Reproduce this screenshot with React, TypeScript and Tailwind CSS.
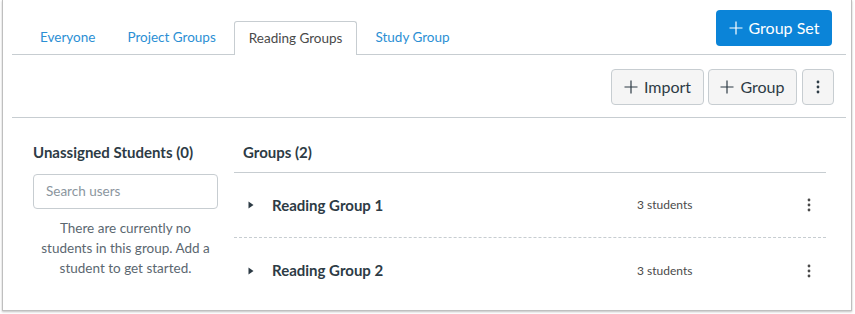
import React from "react";

const tabs = ["Everyone", "Project Groups", "Reading Groups", "Study Group"];
const active = "Reading Groups";

const groups = [
  { name: "Reading Group 1", count: "3 students" },
  { name: "Reading Group 2", count: "3 students" },
];

function Kebab({ className = "" }: { className?: string }) {
  return (
    <svg width="4" height="16" viewBox="0 0 4 16" className={className}>
      <circle cx="2" cy="3" r="1.4" fill="currentColor" />
      <circle cx="2" cy="8" r="1.4" fill="currentColor" />
      <circle cx="2" cy="13" r="1.4" fill="currentColor" />
    </svg>
  );
}

function Plus() {
  return (
    <svg width="14" height="14" viewBox="0 0 14 14" className="shrink-0">
      <path d="M7 0.5v13M0.5 7h13" stroke="currentColor" strokeWidth="1.2" />
    </svg>
  );
}

export default function App() {
  return (
    <div className="w-[855px] h-[314px] bg-white font-['Lato','Liberation_Sans',sans-serif] text-[#2d3b45]">
      <div className="ml-[2px] w-[850px] h-[311px] border-x border-b border-[#bfbfbf] shadow-[0_1px_2px_rgba(0,0,0,0.25)] pl-[9px] pr-[5px]">
        {/* tabs + group set */}
        <div className="flex justify-between h-[55px] border-b border-[#c7cdd1]">
          <ul className="flex items-end gap-[4px] pl-[14px]">
            {tabs.map((t) => (
              <li
                key={t}
                className={
                  t === active
                    ? "h-[34px] -mb-px px-[14px] flex items-center bg-white border border-b-0 border-[#c7cdd1] rounded-t-[3px] text-[13.5px] text-[#4a4a4a]"
                    : "h-[34px] px-[14px] flex items-center text-[13.5px] text-[#2b8fd4]"
                }
              >
                {t}
              </li>
            ))}
          </ul>
          <button className="mt-[10px] mr-[14px] h-[36px] w-[116px] flex items-center justify-center gap-[6px] rounded-[4px] bg-[#0b84d8] text-white text-[16px]">
            <Plus />
            Group Set
          </button>
        </div>

        {/* toolbar */}
        <div className="flex justify-end gap-[4px] pt-[14px] pb-[12px] pr-[12px] border-b border-[#c7cdd1]">
          <button className="h-[36px] w-[93px] flex items-center justify-center gap-[6px] rounded-[4px] bg-[#f5f5f5] border border-[#c7cdd1] text-[16px]">
            <Plus />
            Import
          </button>
          <button className="h-[36px] w-[89px] flex items-center justify-center gap-[6px] rounded-[4px] bg-[#f5f5f5] border border-[#c7cdd1] text-[16px]">
            <Plus />
            Group
          </button>
          <button className="ml-px h-[36px] w-[32px] flex items-center justify-center rounded-[4px] bg-[#f5f5f5] border border-[#c7cdd1]">
            <Kebab />
          </button>
        </div>

        {/* content */}
        <div className="flex pl-[21px] pr-[20px]">
          <div className="w-[185px] pt-[24px]">
            <h3 className="text-[15px] leading-[20px] font-bold">Unassigned Students (0)</h3>
            <div className="mt-[12px] h-[35px] flex items-center px-[12px] border border-[#c7cdd1] rounded-[4px] text-[13.5px] text-[#8b969e]">
              Search users
            </div>
            <p className="mt-[9px] text-center text-[13.5px] leading-[20px] text-[#5b6770]">
              There are currently no students in this group. Add a student to get started.
            </p>
          </div>

          <div className="ml-[16px] flex-1 pt-[24px]">
            <h3 className="pl-[9px] text-[15px] leading-[20px] font-bold pb-[10px] border-b border-[#c7cdd1]">
              Groups (2)
            </h3>
            {groups.map((g, i) => (
              <div
                key={g.name}
                className={`flex items-center h-[65px] pl-[14px] pr-[14px] ${
                  i === 0 ? "border-b border-dashed border-[#c7cdd1]" : ""
                }`}
              >
                <svg width="6" height="8" viewBox="0 0 6 8" className="shrink-0">
                  <path d="M0.5 0.5L5.5 4L0.5 7.5Z" fill="#2d3b45" />
                </svg>
                <span className="ml-[18px] w-[365px] text-[15px] font-bold">{g.name}</span>
                <span className="text-[12px] text-[#4a4a4a]">{g.count}</span>
                <Kebab className="ml-auto mr-[1px] text-[#4a4a4a]" />
              </div>
            ))}
          </div>
        </div>
      </div>
    </div>
  );
}
